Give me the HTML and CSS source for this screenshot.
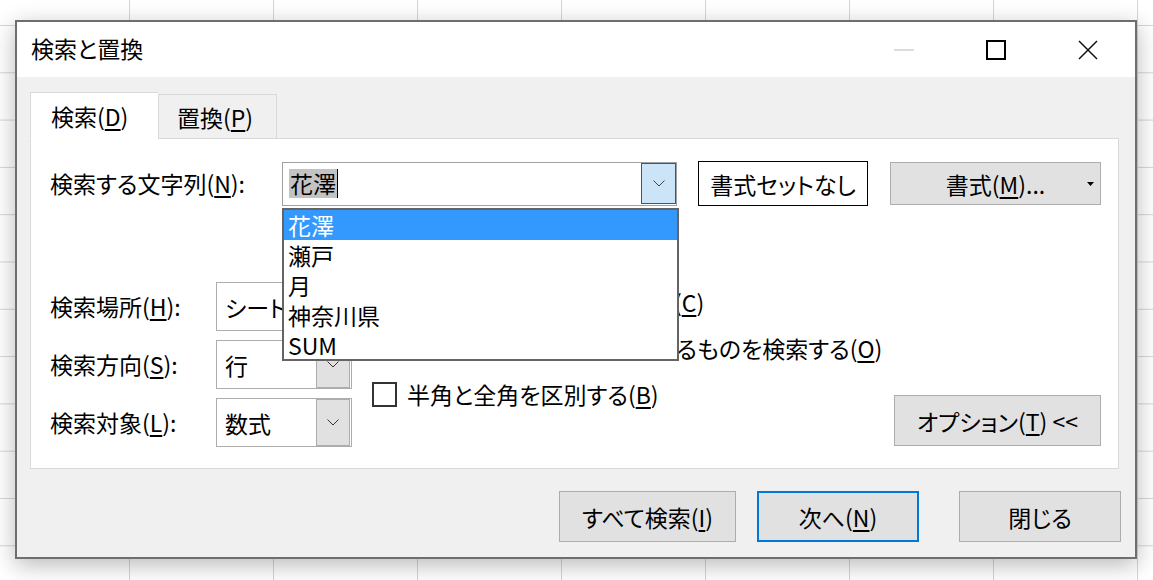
FILE: index.html
```html
<!DOCTYPE html>
<html lang="ja">
<head>
    <meta charset="UTF-8">
    <title>検索と置換</title>
    <link rel="stylesheet" href="styles.css">
</head>
<body>
    <div class="dialog">
        <div class="titlebar">
            <span class="title">検索と置換</span>
            <div class="controls">
                <div class="ctl">
                    <svg width="20" height="2" viewBox="0 0 20 2"><path d="M0 1H20" stroke="#c4c4c4" stroke-width="1.2"/></svg>
                </div>
                <div class="ctl">
                    <svg width="20" height="20" viewBox="0 0 20 20"><rect x="1" y="1" width="18" height="18" fill="none" stroke="#000" stroke-width="2"/></svg>
                </div>
                <div class="ctl">
                    <svg width="20" height="20" viewBox="0 0 20 20"><path d="M1 1L19 19M19 1L1 19" stroke="#111" stroke-width="1.5"/></svg>
                </div>
            </div>
        </div>

        <div class="content">
            <div class="tabs">
                <div class="tab active">検索(<u>D</u>)</div>
                <div class="tab">置換(<u>P</u>)</div>
            </div>

            <div class="panel">
                <div class="find-row">
                    <label class="label find-label">検索する文字列(<u>N</u>):</label>
                    <div class="combo">
                        <div class="combo-text"><span class="sel">花澤</span><span class="caret"></span></div>
                        <div class="combo-btn focus">
                            <svg width="12" height="7" viewBox="0 0 12 7"><path d="M0.5 0.5L6 6L11.5 0.5" fill="none" stroke="#444" stroke-width="1"/></svg>
                        </div>
                        <ul class="list">
                            <li class="hl">花澤</li>
                            <li>瀬戸</li>
                            <li>月</li>
                            <li>神奈川県</li>
                            <li>SUM</li>
                        </ul>
                    </div>
                    <button class="btn plain">書式セットなし</button>
                    <button class="btn fmt">
                        <span></span>
                        <span>書式(<u>M</u>)...</span>
                        <svg class="tri" width="7" height="4" viewBox="0 0 7 4"><path d="M0 0H7L3.5 4Z" fill="#000"/></svg>
                    </button>
                </div>

                <div class="options">
                    <div class="selects">
                        <div class="sel-row">
                            <label class="label sel-label">検索場所(<u>H</u>):</label>
                            <div class="select"><span class="select-text">シート</span>
                                <div class="select-btn"><svg width="12" height="7" viewBox="0 0 12 7"><path d="M0.5 0.5L6 6L11.5 0.5" fill="none" stroke="#333" stroke-width="1"/></svg></div>
                            </div>
                        </div>
                        <div class="sel-row">
                            <label class="label sel-label">検索方向(<u>S</u>):</label>
                            <div class="select"><span class="select-text">行</span>
                                <div class="select-btn"><svg width="12" height="7" viewBox="0 0 12 7"><path d="M0.5 0.5L6 6L11.5 0.5" fill="none" stroke="#333" stroke-width="1"/></svg></div>
                            </div>
                        </div>
                        <div class="sel-row">
                            <label class="label sel-label">検索対象(<u>L</u>):</label>
                            <div class="select"><span class="select-text">数式</span>
                                <div class="select-btn"><svg width="12" height="7" viewBox="0 0 12 7"><path d="M0.5 0.5L6 6L11.5 0.5" fill="none" stroke="#333" stroke-width="1"/></svg></div>
                            </div>
                        </div>
                    </div>

                    <div class="checks">
                        <div class="check"><span class="box"></span>大文字と小文字を区別する(<u>C</u>)</div>
                        <div class="check"><span class="box"></span>セル内容が完全に同一であるものを検索する(<u>O</u>)</div>
                        <div class="check"><span class="box"></span>半角と全角を区別する(<u>B</u>)</div>
                    </div>

                    <button class="btn opt-btn">オプション(<u>T</u>) &lt;&lt;</button>
                </div>
            </div>

            <div class="footer">
                <button class="btn foot-btn all">すべて検索(<u>I</u>)</button>
                <button class="btn foot-btn next">次へ(<u>N</u>)</button>
                <button class="btn foot-btn close">閉じる</button>
            </div>
        </div>
    </div>
</body>
</html>
```

FILE: styles.css
```css
* {
    box-sizing: border-box;
}

body {
    margin: 0;
    width: 1153px;
    height: 580px;
    overflow: hidden;
    font-family: "Noto Sans CJK JP", "Noto Sans", sans-serif;
    font-feature-settings: "palt";
    color: #000;
    background-color: #fff;
    background-image:
        linear-gradient(to right, #d6d6d6 1px, transparent 1px),
        linear-gradient(to bottom, #d6d6d6 1px, transparent 1px);
    background-size: 144px 47.3px;
    background-position: 129px 25px;
    padding-top: 20px;
    padding-left: 15px;
}

u {
    text-decoration: underline;
    text-underline-offset: 3px;
    text-decoration-thickness: 1.5px;
}

.dialog {
    width: 1122px;
    height: 539px;
    border: 2px solid #6e6e6e;
    background-color: #f0f0f0;
    box-shadow: 0 6px 22px rgba(0, 0, 0, 0.28);
    display: flex;
    flex-direction: column;
}

/* title bar */
.titlebar {
    height: 55px;
    background-color: #fff;
    display: flex;
    align-items: center;
    padding-left: 14px;
}

.title {
    font-size: 23px;
    line-height: 1;
    padding-bottom: 2px;
}

.controls {
    margin-left: auto;
    display: flex;
    margin-right: 1px;
}

.ctl {
    width: 92px;
    height: 55px;
    display: flex;
    align-items: center;
    justify-content: center;
}

.ctl svg {
    display: block;
}

/* body */
.content {
    flex: 1;
    padding: 15px 14px 15px 13px;
    display: flex;
    flex-direction: column;
}

.tabs {
    display: flex;
    align-items: flex-end;
    height: 47px;
    margin-bottom: -1px;
    position: relative;
    z-index: 1;
}

.tab {
    height: 45px;
    padding: 0 18px;
    border: 1px solid #d9d9d9;
    background-color: #f0f0f0;
    font-size: 23px;
    display: flex;
    align-items: center;
    width: 119px;
    white-space: nowrap;
}

.tab.active {
    width: 128px;
    height: 47px;
    background-color: #fff;
    border-right: none;
    border-bottom-color: #fff;
    padding-left: 20px;
}

.panel {
    height: 331px;
    width: 1089px;
    border: 1px solid #d9d9d9;
    background-color: #fff;
    padding: 22px 17px 0 19px;
}

.label {
    font-size: 23px;
    white-space: nowrap;
}

/* find row */
.find-row {
    display: flex;
    align-items: center;
    height: 45px;
}

.find-label {
    width: 232px;
    padding-bottom: 2px;
}

.combo {
    position: relative;
    width: 395px;
    height: 44px;
    border: 1px solid #a0a0a0;
    display: flex;
    align-items: center;
    background-color: #fff;
}

.combo-text {
    flex: 1;
    display: flex;
    align-items: center;
    padding-left: 6px;
    font-size: 23px;
}

.sel {
    background-color: #c3c3c3;
    height: 29px;
    line-height: 29px;
    padding: 0 1px;
}

.caret {
    width: 1px;
    height: 29px;
    background-color: #000;
}

.combo-btn {
    width: 35px;
    height: 41px;
    display: flex;
    align-items: center;
    justify-content: center;
}

.combo-btn.focus {
    background-color: #cce4f7;
    border: 1px solid #0067c0;
}

.list {
    position: absolute;
    left: -1px;
    top: 45px;
    width: 397px;
    height: 153px;
    margin: 0;
    padding: 0;
    list-style: none;
    background-color: #fff;
    border: 2px solid #646464;
    z-index: 5;
}

.list li {
    height: 30px;
    line-height: 30px;
    padding-left: 4px;
    font-size: 23px;
}

.list li.hl {
    background-color: #3399ff;
    color: #fff;
}

.btn {
    font-family: inherit;
    font-feature-settings: "palt";
    font-size: 23px;
    color: #000;
    background-color: #e1e1e1;
    border: 1px solid #adadad;
    padding: 0;
    cursor: pointer;
    white-space: nowrap;
}

.btn.plain {
    width: 170px;
    height: 45px;
    margin-left: 21px;
    background-color: #fff;
    border: 1px solid #000;
}

.btn.fmt {
    width: 211px;
    height: 43px;
    margin-left: 22px;
    display: grid;
    grid-template-columns: 1fr auto 1fr;
    align-items: center;
}

.btn.fmt .tri {
    justify-self: end;
    margin-right: 6px;
}

/* options */
.options {
    display: flex;
    margin-top: 76px;
}

.selects {
    display: flex;
    flex-direction: column;
    gap: 9px;
}

.sel-row {
    display: flex;
    align-items: center;
    height: 49px;
}

.sel-label {
    width: 166px;
    padding-bottom: 2px;
}

.select {
    width: 136px;
    height: 49px;
    border: 1px solid #adadad;
    display: flex;
    align-items: center;
    background-color: #fff;
}

.select-text {
    flex: 1;
    font-size: 23px;
    padding-left: 8px;
    white-space: nowrap;
    overflow: hidden;
}

.select-btn {
    width: 34px;
    height: 47px;
    margin-right: 1px;
    background-color: #e1e1e1;
    border: 1px solid #adadad;
    display: flex;
    align-items: center;
    justify-content: center;
}

.checks {
    margin-left: 20px;
    margin-top: -3px;
    display: flex;
    flex-direction: column;
}

.check {
    height: 46px;
    display: flex;
    align-items: center;
    font-size: 23px;
    white-space: nowrap;
}

.check .box {
    width: 25px;
    height: 25px;
    border: 2px solid #333;
    margin-right: 10px;
    background-color: #fff;
}

.btn.opt-btn {
    width: 207px;
    height: 51px;
    margin-left: auto;
    align-self: flex-end;
    margin-bottom: 1px;
}

/* footer */
.footer {
    margin-top: auto;
    display: flex;
    justify-content: flex-end;
}

.foot-btn {
    height: 51px;
}

.foot-btn.all {
    width: 177px;
}

.foot-btn.next {
    width: 162px;
    margin-left: 21px;
    border: 2px solid #0078d7;
}

.foot-btn.close {
    width: 162px;
    margin-left: 40px;
}
```
